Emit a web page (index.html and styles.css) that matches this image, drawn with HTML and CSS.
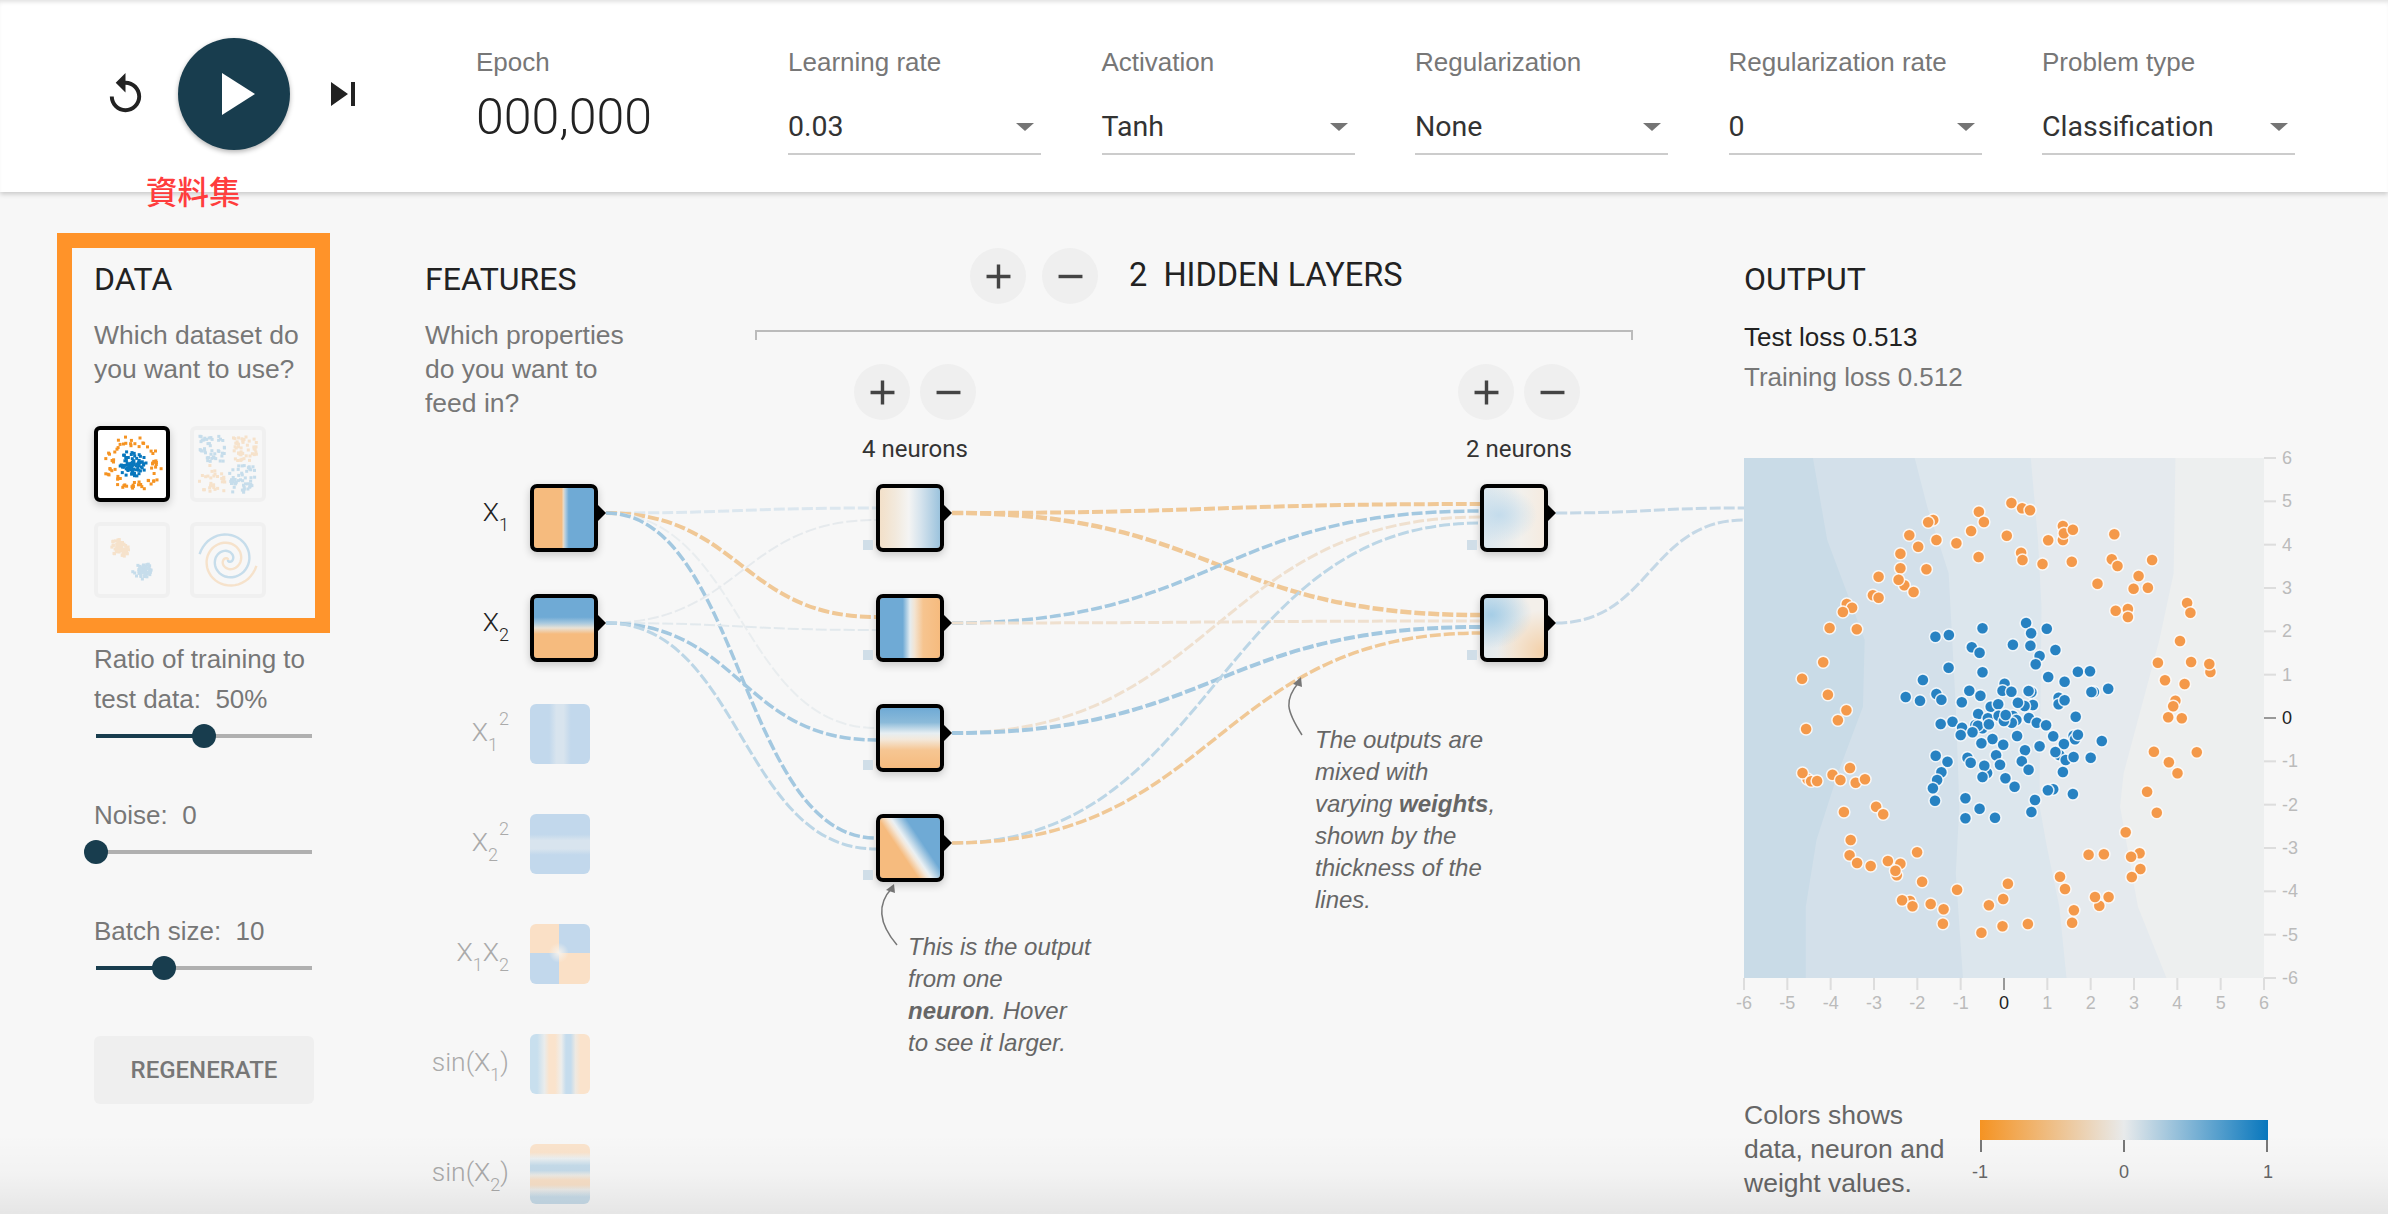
FILE: index.html
```html
<!DOCTYPE html>
<html lang="en">
<head>
  <meta charset="UTF-8">
  <meta name="viewport" content="width=device-width, initial-scale=1.0">
  <title>Neural Network Playground</title>
  <link rel="stylesheet" href="styles.css">
</head>
<body>
  <header class="top-bar">
    <div class="player">
      <svg class="icon-reset" viewBox="0 0 24 24"><path d="M12 5V1L7 6l5 5V7c3.31 0 6 2.69 6 6s-2.69 6-6 6-6-2.69-6-6H4c0 4.42 3.58 8 8 8s8-3.58 8-8-3.58-8-8-8z"/></svg>
      <div class="play-btn">
        <svg class="icon-play" viewBox="0 0 24 24"><path d="M8 5v14l11-7z"/></svg>
      </div>
      <svg class="icon-step" viewBox="0 0 24 24"><path d="M6 18l8.5-6L6 6v12zM16 6v12h2V6h-2z"/></svg>
    </div>
    <div class="epoch">
      <div class="field-label">Epoch</div>
      <div class="epoch-value">000,000</div>
    </div>
    <div class="selects">
      <div class="select-box">
        <div class="field-label">Learning rate</div>
        <div class="select-value">0.03</div>
      </div>
      <div class="select-box">
        <div class="field-label">Activation</div>
        <div class="select-value">Tanh</div>
      </div>
      <div class="select-box">
        <div class="field-label">Regularization</div>
        <div class="select-value">None</div>
      </div>
      <div class="select-box">
        <div class="field-label">Regularization rate</div>
        <div class="select-value">0</div>
      </div>
      <div class="select-box">
        <div class="field-label">Problem type</div>
        <div class="select-value">Classification</div>
      </div>
    </div>
  </header>

  <div class="red-label">資料集</div>

  <main class="main">
    <svg class="links" id="links" viewBox="0 192 2388 1022"></svg>
    <div class="highlight"></div>

    <section class="col-data">
      <h2>DATA</h2>
      <p class="desc">Which dataset do<br>you want to use?</p>
      <div class="datasets">
        <div class="dataset selected"><svg id="ds-circle" viewBox="0 0 68 68"></svg></div>
        <div class="dataset"><svg id="ds-xor" viewBox="0 0 68 68"></svg></div>
        <div class="dataset"><svg id="ds-gauss" viewBox="0 0 68 68"></svg></div>
        <div class="dataset"><svg id="ds-spiral" viewBox="0 0 68 68"></svg></div>
      </div>
      <div class="control-label first">Ratio of training to<br>test data:&nbsp; 50%</div>
      <div class="slider"><div class="slider-fill" style="width:50%"></div><div class="slider-thumb" style="left:50%"></div></div>
      <div class="control-label">Noise:&nbsp; 0</div>
      <div class="slider"><div class="slider-thumb" style="left:0%"></div></div>
      <div class="control-label">Batch size:&nbsp; 10</div>
      <div class="slider"><div class="slider-fill" style="width:31.5%"></div><div class="slider-thumb" style="left:31.5%"></div></div>
      <button class="regenerate">REGENERATE</button>
    </section>

    <section class="col-features">
      <h2>FEATURES</h2>
      <p class="desc">Which properties<br>do you want to<br>feed in?</p>
      <div class="feature-list">
        <div class="feature active">
          <div class="feature-label">X<sub>1</sub></div>
          <div class="node f-x1"></div>
        </div>
        <div class="feature active">
          <div class="feature-label">X<sub>2</sub></div>
          <div class="node f-x2"></div>
        </div>
        <div class="feature">
          <div class="feature-label">X<sub>1</sub><sup>2</sup></div>
          <div class="tile f-x1sq"></div>
        </div>
        <div class="feature">
          <div class="feature-label">X<sub>2</sub><sup>2</sup></div>
          <div class="tile f-x2sq"></div>
        </div>
        <div class="feature">
          <div class="feature-label">X<sub>1</sub>X<sub>2</sub></div>
          <div class="tile f-x1x2"></div>
        </div>
        <div class="feature">
          <div class="feature-label">sin(X<sub>1</sub>)</div>
          <div class="tile f-sinx1"></div>
        </div>
        <div class="feature">
          <div class="feature-label">sin(X<sub>2</sub>)</div>
          <div class="tile f-sinx2"></div>
        </div>
      </div>
    </section>

    <section class="col-hidden">
      <div class="layers-header">
        <div class="round-btn"><svg viewBox="0 0 24 24"><path d="M19 13h-6v6h-2v-6H5v-2h6V5h2v6h6v2z"/></svg></div>
        <div class="round-btn"><svg viewBox="0 0 24 24"><path d="M19 13H5v-2h14v2z"/></svg></div>
        <div class="layers-title">2&nbsp; HIDDEN LAYERS</div>
      </div>
      <div class="bracket"></div>
      <div class="layers">
        <div class="layer">
          <div class="layer-btns">
            <div class="round-btn"><svg viewBox="0 0 24 24"><path d="M19 13h-6v6h-2v-6H5v-2h6V5h2v6h6v2z"/></svg></div>
            <div class="round-btn"><svg viewBox="0 0 24 24"><path d="M19 13H5v-2h14v2z"/></svg></div>
          </div>
          <div class="neuron-count">4 neurons</div>
          <div class="layer-nodes">
            <div class="node n-1a"><span class="bias"></span></div>
            <div class="node n-1b"><span class="bias"></span></div>
            <div class="node n-1c"><span class="bias"></span></div>
            <div class="node n-1d"><span class="bias"></span></div>
          </div>
        </div>
        <div class="layer">
          <div class="layer-btns">
            <div class="round-btn"><svg viewBox="0 0 24 24"><path d="M19 13h-6v6h-2v-6H5v-2h6V5h2v6h6v2z"/></svg></div>
            <div class="round-btn"><svg viewBox="0 0 24 24"><path d="M19 13H5v-2h14v2z"/></svg></div>
          </div>
          <div class="neuron-count">2 neurons</div>
          <div class="layer-nodes">
            <div class="node n-2a"><span class="bias"></span></div>
            <div class="node n-2b"><span class="bias"></span></div>
          </div>
        </div>
      </div>
    </section>

    <section class="col-output">
      <h2>OUTPUT</h2>
      <div class="loss test">Test loss 0.513</div>
      <div class="loss">Training loss 0.512</div>
      <div class="plot">
        <svg class="heatmap" viewBox="67 54 1456 1560" preserveAspectRatio="none">
          <rect x="67" y="54" width="1456" height="1560" fill="#edefef"/>
          <polygon fill="#e5eaee" points="67,54 1275,54 1270,400 1230,600 1180,800 1130,1000 1120,1100 1170,1400 1250,1614 67,1614"/>
          <polygon fill="#dce6ed" points="67,54 870,54 890,300 900,500 895,1000 895,1100 915,1220 950,1400 970,1614 67,1614"/>
          <polygon fill="#d3e0ea" points="67,54 545,54 580,200 640,400 660,800 670,1100 660,1300 680,1614 67,1614"/>
          <polygon fill="#c9dbe7" points="67,54 260,54 300,300 405,600 400,800 330,1000 270,1200 240,1400 240,1614 67,1614"/>
        </svg>
        <svg class="plot-top" id="plot" width="560" height="560" viewBox="0 0 560 560"></svg>
      </div>
      <div class="legend">
        <p class="legend-text">Colors shows<br>data, neuron and<br>weight values.</p>
        <svg class="legend-scale" width="320" height="66" viewBox="-16 0 320 66">
          <defs>
            <linearGradient id="scale-grad">
              <stop offset="0" stop-color="#f59322"/>
              <stop offset="0.5" stop-color="#e8eaeb"/>
              <stop offset="1" stop-color="#0877bd"/>
            </linearGradient>
          </defs>
          <rect x="0" y="0" width="288" height="20" fill="url(#scale-grad)"/>
          <path d="M1 20v12M144 20v12M287 20v12" stroke="#777" stroke-width="2" fill="none"/>
          <text x="0" y="58" text-anchor="middle">-1</text>
          <text x="144" y="58" text-anchor="middle">0</text>
          <text x="288" y="58" text-anchor="middle">1</text>
        </svg>
      </div>
    </section>

    <p class="note note-neuron">This is the output<br>from one<br><b>neuron</b>. Hover<br>to see it larger.</p>
    <p class="note note-weights">The outputs are<br>mixed with<br>varying <b>weights</b>,<br>shown by the<br>thickness of the<br>lines.</p>
  </main>

  <div class="bottom-shade"></div>

  <script src="script.js"></script>
</body>
</html>
```

FILE: styles.css
```css
* {
  box-sizing: border-box;
}
html, body {
  margin: 0;
  padding: 0;
  height: 100%;
  overflow: hidden;
}
body {
  font-family: "Liberation Sans", Arial, sans-serif;
  background-color: #f7f7f7;
  color: #777;
  position: relative;
}
h2 {
  margin: 1px 0 0;
  font-family: Roboto, sans-serif;
  font-weight: 400;
  font-size: 32px;
  line-height: 40px;
  color: #222;
}
p {
  margin: 0;
}

/* top bar */
.top-bar {
  display: flex;
  height: 192px;
  padding-left: 102px;
  background: #fff;
  box-shadow: 0 2px 5px rgba(0, 0, 0, 0.2), inset 0 4px 4px -2px rgba(0, 0, 0, 0.12);
  position: relative;
  z-index: 2;
}
.player {
  display: flex;
  align-items: center;
  gap: 29px;
  height: 188px;
}
.icon-reset {
  width: 47px;
  height: 47px;
  fill: #222;
}
.icon-step {
  width: 48px;
  height: 48px;
  fill: #222;
}
.play-btn {
  width: 112px;
  height: 112px;
  border-radius: 50%;
  background: #183d4e;
  box-shadow: 0 2px 5px rgba(0, 0, 0, 0.3);
  display: flex;
  align-items: center;
  justify-content: center;
}
.icon-play {
  width: 72px;
  height: 72px;
  fill: #fff;
}
.epoch {
  width: 312px;
  margin-left: 109px;
  padding-top: 45px;
}
.field-label {
  font-size: 26px;
  line-height: 34px;
  color: #777;
}
.epoch-value {
  font-family: Roboto, sans-serif;
  font-weight: 300;
  font-size: 50px;
  line-height: 56px;
  margin-top: 10px;
  color: #222;
}
.selects {
  display: flex;
  gap: 60.5px;
  padding-top: 45px;
}
.select-box {
  width: 253px;
  height: 110px;
}
.select-value {
  position: relative;
  margin-top: 28px;
  height: 48px;
  font-family: Roboto, sans-serif;
  font-size: 28.5px;
  line-height: 40px;
  color: #333;
  border-bottom: 2px solid #ccc;
}
.select-value::after {
  content: "";
  position: absolute;
  right: 7px;
  top: 16px;
  border-left: 9px solid transparent;
  border-right: 9px solid transparent;
  border-top: 8px solid #757575;
}
.red-label {
  position: absolute;
  left: 146px;
  top: 170px;
  z-index: 3;
  font-family: "Noto Sans CJK TC", sans-serif;
  font-weight: 500;
  font-size: 31.5px;
  line-height: 40px;
  color: #ff3d3d;
}

/* main columns */
.main {
  position: relative;
  display: flex;
  height: 1022px;
  padding-top: 66px;
}
.links {
  position: absolute;
  left: 0;
  top: 0;
  width: 2388px;
  height: 1022px;
  fill: none;
}
.highlight {
  position: absolute;
  left: 57px;
  top: 41px;
  width: 273px;
  height: 400px;
  border: 15px solid #ff9329;
}
.desc {
  font-size: 26.5px;
  line-height: 34px;
  margin-top: 19px;
}

/* data column */
.col-data {
  position: relative;
  width: 220px;
  margin-left: 94px;
}
.datasets {
  display: grid;
  grid-template-columns: 76px 76px;
  grid-auto-rows: 76px;
  gap: 20px;
  margin-top: 40px;
}
.dataset {
  border: 4px solid #f0f0f0;
  border-radius: 6px;
}
.dataset svg {
  display: block;
  width: 68px;
  height: 68px;
  opacity: 0.2;
}
.dataset.selected {
  border-color: #000;
  background: #fff;
  box-shadow: 0 3px 8px rgba(0, 0, 0, 0.2);
}
.dataset.selected svg {
  opacity: 1;
}
.control-label {
  font-size: 26px;
  line-height: 40px;
  margin-top: 47px;
  white-space: nowrap;
}
.control-label.first {
  margin-top: 41px;
}
.slider {
  position: relative;
  width: 216px;
  height: 24px;
  margin: 5px 0 0 2px;
}
.slider::before {
  content: "";
  position: absolute;
  left: 0;
  right: 0;
  top: 10px;
  height: 4px;
  background: #b0b0b0;
}
.slider-fill {
  position: absolute;
  left: 0;
  top: 10px;
  height: 4px;
  background: #183d4e;
}
.slider-thumb {
  position: absolute;
  top: 0;
  width: 24px;
  height: 24px;
  margin-left: -12px;
  border-radius: 50%;
  background: #183d4e;
}
.regenerate {
  display: block;
  width: 220px;
  height: 68px;
  margin-top: 56px;
  border: none;
  border-radius: 6px;
  background: #efefef;
  font-family: Roboto, sans-serif;
  font-weight: 500;
  font-size: 24px;
  color: #777;
}

/* features column */
.col-features {
  position: relative;
  width: 330px;
  margin-left: 111px;
}
.feature-list {
  display: grid;
  grid-auto-rows: 110px;
  margin-top: 64px;
}
.feature {
  display: flex;
  gap: 21px;
  align-items: flex-start;
}
.feature-label {
  width: 84px;
  text-align: right;
  font-family: Roboto, sans-serif;
  font-weight: 300;
  font-size: 26.5px;
  line-height: 55px;
  color: #aaa;
  white-space: nowrap;
}
.feature.active .feature-label {
  color: #222;
}
.feature-label sub,
.feature-label sup {
  font-size: 18px;
  line-height: 0;
}
.feature-label sub {
  vertical-align: -10px;
}
.feature-label sup {
  vertical-align: 16px;
  margin-left: 1px;
}
.tile {
  width: 60px;
  height: 60px;
  border-radius: 6px;
}
.node {
  position: relative;
  width: 68px;
  height: 68px;
  border: 4.5px solid #000;
  border-radius: 7px;
  box-shadow: 0 3px 8px rgba(0, 0, 0, 0.2);
  background-clip: padding-box;
}
.node::after {
  content: "";
  position: absolute;
  left: 62px;
  top: 15px;
  border-top: 10px solid transparent;
  border-bottom: 10px solid transparent;
  border-left: 10px solid #000;
}
.bias {
  position: absolute;
  left: -17px;
  top: 52px;
  width: 10px;
  height: 10px;
  background: #d0dee8;
}
.f-x1 { background-image: linear-gradient(90deg, #f6bb7e 0 46%, #e9d8c2 49%, #b6cfe0 52%, #6faad5 58%, #6faad5 100%); }
.f-x2 { background-image: linear-gradient(180deg, #6faad5 0 32%, #a8c9df 42%, #e9e2d6 50%, #f6bb7e 60%, #f6bb7e 100%); }
.f-x1sq { background-image: linear-gradient(90deg, #c2d8ec 0 32%, #d8e4ee 44% 56%, #c2d8ec 68% 100%); }
.f-x2sq { background-image: linear-gradient(180deg, #c2d8ec 0 34%, #d8e4ee 44% 58%, #c2d8ec 68% 100%); }
.f-x1x2 { background-image: radial-gradient(circle at 48% 48%, #f6f2ec 0, rgba(246, 242, 236, 0) 10px), conic-gradient(from 0deg at 48% 48%, #c2d8ec 0 90deg, #fae0c6 90deg 180deg, #c2d8ec 180deg 270deg, #fae0c6 270deg 360deg); }
.f-sinx1 { background-image: linear-gradient(90deg, #c8dfee 0 12%, #e9ecec 24%, #fae3cc 32% 42%, #eeeeec 52%, #c5dced 60% 68%, #eee9e2 76%, #fae3cc 84% 100%); }
.f-sinx2 { background-image: linear-gradient(180deg, #fae3cc 0 14%, #ecf0f1 24%, #c5dbea 36% 44%, #ecebe6 52%, #f8e0c8 60% 68%, #ececea 76%, #c8dce9 88% 100%); }
.n-1a { background-image: linear-gradient(90deg, #f3e0c9 0, #f2e9dc 25%, #f4f4f3 48%, #d5e3ed 68%, #9cc3dd 100%); }
.n-1b { background-image: linear-gradient(90deg, #6faad5 0 38%, #e4ecf0 50%, #f3e3d0 58%, #f6c48f 72%, #f6bb7e 100%); }
.n-1c { background-image: linear-gradient(180deg, #6faad5 0, #8bbad9 24%, #e6eef2 42%, #f3e9dc 52%, #f6c693 70%, #f6bb7e 100%); }
.n-1d { background-image: linear-gradient(56deg, #f6bb7e 0 38%, #f4e8da 47%, #eaf0f3 51%, #6faad5 66%, #6faad5 100%); }
.n-2a { background-image: radial-gradient(ellipse at 25% 45%, #c4dcec 0, rgba(196, 220, 236, 0) 60%), linear-gradient(90deg, #dbe7ef, #f2f0ec 62%, #f5ebe0 100%); }
.n-2b { background-image: radial-gradient(ellipse at 12% 28%, #a5cde6 0, rgba(165, 205, 230, 0) 55%), radial-gradient(ellipse at 100% 90%, #f3d0a8 0, rgba(243, 208, 168, 0) 55%), linear-gradient(100deg, #dce8f0, #f3efea 60%); }

/* hidden layers */
.col-hidden {
  position: relative;
  width: 989px;
  margin-top: -10px;
}
.layers-header {
  display: flex;
  gap: 16px;
  height: 56px;
  padding-left: 215px;
}
.round-btn {
  display: flex;
  align-items: center;
  justify-content: center;
  width: 56px;
  height: 56px;
  border-radius: 50%;
  background: #efefef;
}
.round-btn svg {
  width: 41px;
  height: 41px;
  fill: #444;
}
.layers-title {
  margin-left: 15px;
  font-family: Roboto, sans-serif;
  font-size: 32.5px;
  line-height: 54px;
  color: #222;
  white-space: nowrap;
}
.bracket {
  width: 878px;
  height: 10px;
  margin-top: 26px;
  border: 2px solid #bbb;
  border-bottom: none;
}
.layers {
  display: flex;
  gap: 482px;
  padding-left: 99px;
}
.layer {
  width: 122px;
  padding-top: 24px;
}
.layer-btns {
  display: flex;
  gap: 10px;
}
.neuron-count {
  margin-top: 14px;
  font-family: Roboto, sans-serif;
  font-size: 24px;
  line-height: 30px;
  text-align: center;
  color: #333;
}
.layer-nodes {
  display: flex;
  flex-direction: column;
  gap: 42px;
  margin: 20px 0 0 22px;
}

/* output */
.col-output {
  position: relative;
  width: 560px;
  margin-left: 0;
}
.loss {
  font-size: 26px;
  line-height: 40px;
}
.loss.test {
  margin-top: 18px;
  color: #222;
}
.plot {
  position: relative;
  width: 560px;
  height: 560px;
  margin-top: 61px;
}
.heatmap {
  display: block;
  width: 520px;
  height: 520px;
}
.plot-top {
  position: absolute;
  left: 0;
  top: 0;
  overflow: visible;
}
.plot-top text {
  font-family: "Liberation Sans", Arial, sans-serif;
  font-size: 18px;
  fill: #bbb;
}
.plot-top text.zero {
  fill: #222;
}
.legend {
  display: flex;
  margin-top: 80px;
}
.legend-text {
  width: 220px;
  font-size: 26.5px;
  line-height: 34px;
  color: #666;
  white-space: nowrap;
}
.legend-scale {
  margin-top: 22px;
  overflow: visible;
}
.legend-scale text {
  font-family: "Liberation Sans", Arial, sans-serif;
  font-size: 18px;
  fill: #666;
}

/* notes */
.note {
  position: absolute;
  font-size: 24px;
  font-style: italic;
  line-height: 32px;
  color: #666;
  white-space: nowrap;
}
.note-neuron {
  left: 908px;
  top: 739px;
}
.note-weights {
  left: 1315px;
  top: 532px;
}
.bottom-shade {
  position: absolute;
  left: 0;
  right: 0;
  bottom: 0;
  height: 80px;
  background: linear-gradient(rgba(0, 0, 0, 0), rgba(0, 0, 0, 0.02) 50%, rgba(0, 0, 0, 0.07));
  pointer-events: none;
  z-index: 4;
}
```

FILE: script.js
```js
const SVG_NS = 'http://www.w3.org/2000/svg';

function el(parent, tag, attrs, text) {
  const node = document.createElementNS(SVG_NS, tag);
  for (const key in attrs) node.setAttribute(key, attrs[key]);
  if (text !== undefined) node.textContent = text;
  parent.appendChild(node);
  return node;
}

// small seeded random so the thumbnails stay the same on each load
let seed = 42;
function rnd() {
  seed = (seed * 16807) % 2147483647;
  return seed / 2147483647;
}

// --- links: x0, y0, x1, y1, colour, width
const ORANGE = '#f0c896';
const PALE = '#efe0cf';
const BLUE = '#a3c8e0';
const SOFT = '#bcd6e6';
const links = [
  [606, 513, 876, 508, '#dce7ef', 3],
  [606, 513, 876, 617, ORANGE, 4],
  [606, 513, 876, 728, '#e9edef', 2],
  [606, 513, 876, 838, BLUE, 3.5],
  [606, 623, 876, 520, '#e6eaed', 2],
  [606, 623, 876, 630, '#e2e9ed', 2],
  [606, 623, 876, 740, BLUE, 3.5],
  [606, 623, 876, 849, SOFT, 3],
  [952, 513, 1480, 504, ORANGE, 4],
  [952, 513, 1480, 615, ORANGE, 4.5],
  [952, 623, 1480, 511, BLUE, 3.5],
  [952, 623, 1480, 621, PALE, 3],
  [952, 733, 1480, 517, PALE, 3],
  [952, 733, 1480, 627, BLUE, 4],
  [952, 843, 1480, 523, SOFT, 3],
  [952, 843, 1480, 633, ORANGE, 3.5],
  [1556, 513, 1744, 508, '#c5d8e6', 3],
  [1556, 623, 1744, 520, '#c5d8e6', 3]
];

const linkSvg = document.querySelector('#links');
links.forEach(([x0, y0, x1, y1, color, width]) => {
  const xm = (x0 + x1) / 2;
  el(linkSvg, 'path', {
    d: `M${x0} ${y0}C${xm} ${y0} ${xm} ${y1} ${x1} ${y1}`,
    stroke: color,
    'stroke-width': width,
    'stroke-dasharray': '11 3'
  });
});

// annotation arrows
el(linkSvg, 'path', { d: 'M897 945C880 925 876 905 892 888', stroke: '#777', 'stroke-width': 1.5 });
el(linkSvg, 'path', { d: 'M894 884l-8 6 9 3z', fill: '#777' });
el(linkSvg, 'path', { d: 'M1302 735C1286 710 1284 700 1299 682', stroke: '#777', 'stroke-width': 1.5 });
el(linkSvg, 'path', { d: 'M1301 677l-8 7 9 3z', fill: '#777' });

// --- output plot, points read in a 2.8 x 3 grid over the plot
const orangePts = [
  [816,189],[846,205],[868,211],[725,215],[739,246],[597,240],[583,247],[703,273],[530,286],[606,300],
  [662,310],[555,320],[803,287],[505,341],[724,351],[843,338],[847,360],[903,372],[985,365],[919,301],
  [960,258],[960,300],[963,280],[988,269],[1104,283],[1097,358],[1113,378],[1210,360],[1172,408],[1158,446],
  [1198,443],[1057,431],[505,385],[578,388],[444,410],[516,436],[500,419],[542,456],[428,466],[444,473],
  [355,492],[370,503],[344,516],[307,564],[383,568],[1108,512],[1142,507],[1142,531],[1308,489],[1317,518],
  [1288,603],[289,667],[230,716],[1226,668],[1319,666],[1373,696],[1370,672],[1246,721],[1301,732],[302,764],
  [354,811],[330,841],[241,867],[1275,782],[1269,799],[1255,832],[1293,835],[1215,935],[1335,937],[1257,967],
  [1281,1000],[245,1017],[231,999],[255,1024],[272,1023],[315,1004],[337,1020],[364,984],[380,1028],[406,1018],
  [437,1100],[457,1123],[347,1116],[1196,1055],[1223,1118],[1136,1177],[366,1200],[363,1246],[384,1269],[422,1278],
  [470,1263],[505,1271],[495,1306],[491,1292],[552,1237],[566,1325],[664,1349],[806,1331],[793,1377],[753,1396],
  [532,1383],[510,1381],[539,1399],[590,1392],[626,1408],[624,1451],[732,1478],[791,1459],[862,1452],[986,1448],
  [991,1411],[1062,1397],[1050,1371],[1088,1371],[966,1347],[952,1310],[1032,1244],[1075,1243],[1175,1240],[1151,1250],
  [1177,1287],[1153,1311]
];
const bluePts = [
  [857,549],[735,565],[915,566],[871,580],[641,585],[603,590],[820,614],[869,617],[939,630],[705,622],
  [727,638],[895,648],[884,673],[640,683],[735,697],[919,711],[1002,695],[1036,694],[965,725],[568,720],
  [797,731],[1087,746],[1047,756],[1040,756],[698,752],[791,752],[816,755],[872,757],[864,753],[606,762],
  [729,767],[520,771],[560,782],[620,779],[677,787],[948,773],[948,793],[965,781],[758,800],[779,793],
  [876,795],[853,798],[834,788],[723,822],[996,830],[750,835],[780,827],[820,828],[830,840],[817,848],
  [795,843],[800,825],[865,834],[887,848],[913,856],[651,845],[618,852],[735,865],[715,855],[678,863],
  [722,857],[753,853],[707,877],[674,885],[832,888],[933,889],[990,887],[994,898],[1002,884],[763,897],
  [732,910],[793,914],[963,912],[895,919],[1069,903],[854,931],[950,945],[939,936],[968,960],[990,951],
  [1038,953],[604,947],[693,953],[702,968],[637,965],[773,946],[784,974],[845,964],[748,999],[740,977],
  [864,989],[960,996],[620,997],[735,1011],[608,1020],[799,1015],[825,1040],[596,1045],[933,1048],[918,1051],
  [988,1062],[687,1075],[602,1082],[882,1080],[727,1106],[872,1116],[687,1135],[770,1133]
];

const plot = document.querySelector('#plot');
function drawPoints(points, fill) {
  points.forEach(([zx, zy]) => {
    el(plot, 'circle', {
      cx: (zx / 2.8 - 24).toFixed(1),
      cy: (zy / 3 - 18).toFixed(1),
      r: 6,
      fill: fill,
      stroke: '#fff',
      'stroke-opacity': 0.85,
      'stroke-width': 1.5
    });
  });
}
drawPoints(orangePts, '#f4994a');
drawPoints(bluePts, '#2782c2');

// axes
for (let i = -6; i <= 6; i++) {
  const pos = (i + 6) * 520 / 12;
  const zero = i === 0;
  const stroke = zero ? '#999' : '#ddd';
  el(plot, 'line', { x1: pos, x2: pos, y1: 520, y2: 532, stroke: stroke, 'stroke-width': 2 });
  el(plot, 'line', { x1: 520, x2: 532, y1: 520 - pos, y2: 520 - pos, stroke: stroke, 'stroke-width': 2 });
  el(plot, 'text', { x: pos, y: 551, 'text-anchor': 'middle', class: zero ? 'zero' : '' }, String(i));
  el(plot, 'text', { x: 538, y: 526 - pos, class: zero ? 'zero' : '' }, String(i));
}

// --- dataset thumbnails
function dot(svg, x, y, color) {
  el(svg, 'rect', { x: x.toFixed(1), y: y.toFixed(1), width: 3, height: 3, fill: color });
}

const dsCircle = document.querySelector('#ds-circle');
for (let i = 0; i < 70; i++) {
  const a = rnd() * Math.PI * 2;
  const r = 18 + rnd() * 11;
  dot(dsCircle, 33 + r * Math.cos(a), 33 + r * Math.sin(a), '#f59322');
}
for (let i = 0; i < 90; i++) {
  const a = rnd() * Math.PI * 2;
  const r = rnd() * 14;
  dot(dsCircle, 33 + r * Math.cos(a), 33 + r * Math.sin(a), '#0877bd');
}

const dsXor = document.querySelector('#ds-xor');
for (let i = 0; i < 190; i++) {
  const x = 4 + rnd() * 57;
  const y = 4 + rnd() * 57;
  if (Math.abs(x - 32) < 2 || Math.abs(y - 32) < 2) continue;
  const same = (x < 32) === (y < 32);
  dot(dsXor, x, y, same ? '#0877bd' : '#f59322');
}

const dsGauss = document.querySelector('#ds-gauss');
function gauss() {
  return (rnd() + rnd() + rnd() - 1.5) * 8;
}
for (let i = 0; i < 70; i++) dot(dsGauss, 22 + gauss(), 22 + gauss(), '#f59322');
for (let i = 0; i < 70; i++) dot(dsGauss, 44 + gauss(), 43 + gauss() * 0.8, '#0877bd');

const dsSpiral = document.querySelector('#ds-spiral');
function spiral(delta, color) {
  let d = '';
  for (let i = 0; i <= 80; i++) {
    const r = i / 80 * 29;
    const t = 1.75 * i / 80 * 2 * Math.PI + delta;
    d += (i ? 'L' : 'M') + (34 + r * Math.sin(t)).toFixed(1) + ' ' + (34 + r * Math.cos(t)).toFixed(1);
  }
  el(dsSpiral, 'path', { d: d, fill: 'none', stroke: color, 'stroke-width': 2.4 });
}
spiral(-0.2, '#0877bd');
spiral(Math.PI - 0.2, '#f59322');
```
